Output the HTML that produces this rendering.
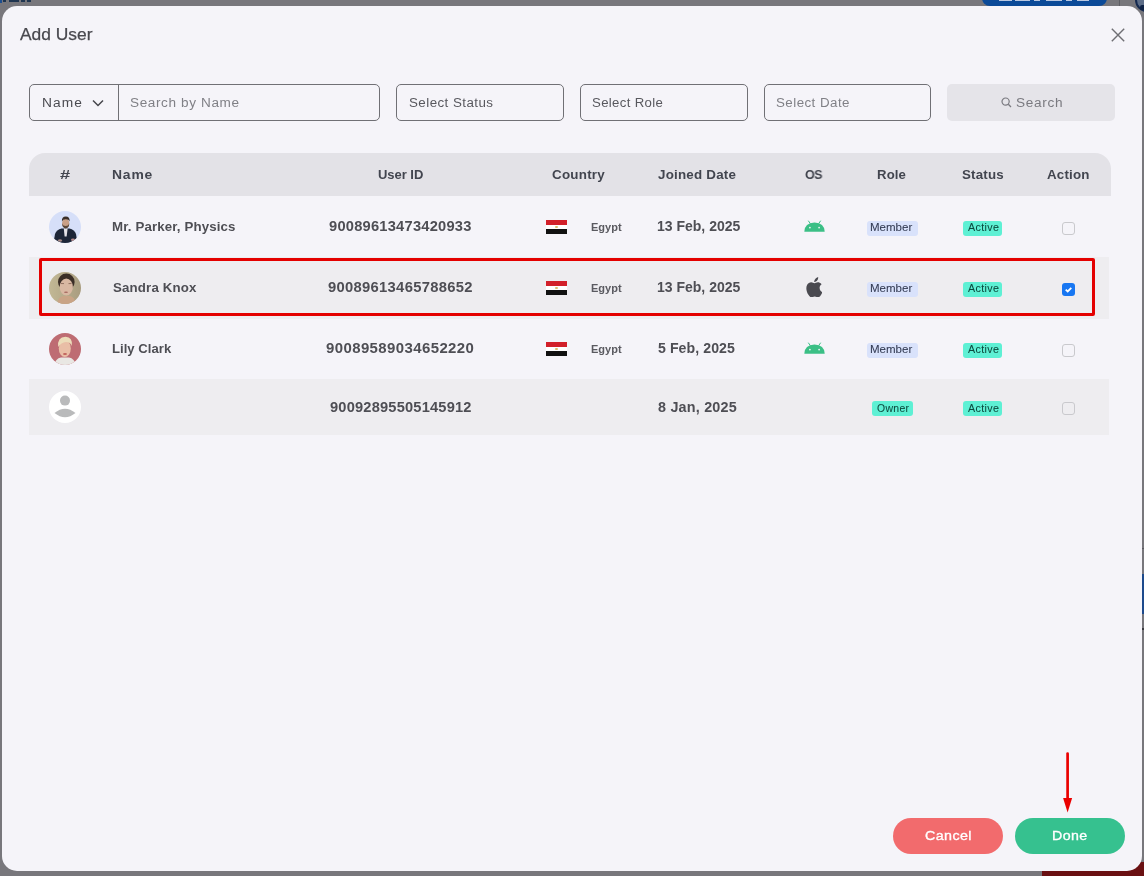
<!DOCTYPE html>
<html><head><meta charset="utf-8">
<style>
*{box-sizing:border-box;margin:0;padding:0}
html,body{width:1144px;height:876px;overflow:hidden}
body{background:#78777c;position:relative;font-family:"Liberation Sans",sans-serif}
.a{position:absolute}
.t{position:absolute;white-space:pre;line-height:1;transform-origin:0 0;will-change:transform}
.box{position:absolute;border:1px solid #707075;border-radius:5px}
.row{position:absolute;left:29px;width:1080px;background:#eeedf0}
.badge{position:absolute;border-radius:3px}
.cb{position:absolute;width:13px;height:13px;border:1px solid #c9c9cd;border-radius:3px}
.flag{position:absolute;width:21px;height:14px}
.flag i{display:block;height:4.6px}
.flag i.w{height:4.8px;position:relative;background:#fff}
.flag i.w b{position:absolute;left:9.3px;top:1.2px;width:2.4px;height:2.6px;background:#dcc070;border-radius:1px}
</style></head>
<body>
<!-- background fragments -->
<div class="a" style="left:0;top:0;width:2px;height:3px;background:#1d4e8f"></div>
<div class="a" style="left:3px;top:0;width:3px;height:1.5px;background:#1f3550"></div>
<div class="a" style="left:9px;top:0;width:10px;height:1.5px;background:#1f3550"></div>
<div class="a" style="left:21px;top:0;width:4px;height:1.5px;background:#1f3550"></div>
<div class="a" style="left:27px;top:0;width:4px;height:1.5px;background:#1f3550"></div>
<div class="a" style="left:982px;top:-10px;width:125px;height:16px;border-radius:8px;background:#0b4a98"></div>
<div class="a" style="left:1119px;top:0;width:1px;height:6px;background:#5e5e63"></div>
<div class="a" style="left:999px;top:0;width:13px;height:1.3px;background:#b9c8e2"></div>
<div class="a" style="left:1015px;top:0;width:15px;height:1.3px;background:#b9c8e2"></div>
<div class="a" style="left:1034px;top:0;width:6px;height:1.3px;background:#b9c8e2"></div>
<div class="a" style="left:1046px;top:0;width:16px;height:1.3px;background:#b9c8e2"></div>
<div class="a" style="left:1066px;top:0;width:6px;height:1.3px;background:#b9c8e2"></div>
<div class="a" style="left:1077px;top:0;width:12px;height:1.3px;background:#b9c8e2"></div>
<div class="a" style="left:1135px;top:-12px;width:24px;height:24px;border-radius:50%;border:2px solid #15294f;background:#5d6d88"></div><div class="a" style="left:1140px;top:5px;width:6px;height:5px;background:#0f2245;border-radius:2px"></div>
<div class="a" style="left:1141px;top:574px;width:3px;height:40px;background:#1d4a8c"></div>
<div class="a" style="left:1141px;top:548px;width:3px;height:1px;background:#5a5a60"></div>
<div class="a" style="left:1141px;top:628px;width:3px;height:2px;background:#3a3a40"></div>
<div class="a" style="left:1042px;top:862px;width:102px;height:14px;background:#6a1012"></div>

<div class="a" style="left:2px;top:6px;width:1139.5px;height:865px;border-radius:15px;background:#f5f4f9"></div>

<!-- close -->
<svg class="a" style="left:1111px;top:28px" width="14" height="14" viewBox="0 0 14 14"><path d="M0.8 0.8L13.2 13.2M13.2 0.8L0.8 13.2" stroke="#6e6e73" stroke-width="1.4"/></svg>

<!-- filters -->
<div class="box" style="left:29px;top:84px;width:351px;height:37px"></div>
<div class="a" style="left:118px;top:84px;width:1px;height:37px;background:#707075"></div>
<svg class="a" style="left:92px;top:99px" width="12" height="8" viewBox="0 0 12 8"><path d="M1 1.5L6 6.5L11 1.5" fill="none" stroke="#46464c" stroke-width="1.5"/></svg>
<div class="box" style="left:396px;top:84px;width:168px;height:37px"></div>
<div class="box" style="left:580px;top:84px;width:168px;height:37px"></div>
<div class="box" style="left:764px;top:84px;width:167px;height:37px"></div>
<div class="a" style="left:947px;top:84px;width:168px;height:37px;border-radius:5px;background:#e5e4e9"></div>
<svg class="a" style="left:1001px;top:97px" width="11" height="11" viewBox="0 0 11 11"><circle cx="4.6" cy="4.6" r="3.6" fill="none" stroke="#7a7a80" stroke-width="1.2"/><path d="M7.3 7.3L10 10" stroke="#7a7a80" stroke-width="1.3"/></svg>

<!-- table header -->
<div class="a" style="left:29px;top:153px;width:1082px;height:43px;border-radius:16px 16px 0 0;background:#e3e2e7"></div>

<!-- row backgrounds -->
<div class="row" style="top:257px;height:62px"></div>
<div class="row" style="top:379px;height:55.5px"></div>

<!-- avatars -->
<svg class="a" style="left:49px;top:211px" width="32" height="32" viewBox="0 0 32 32"><defs><clipPath id="c1"><circle cx="16" cy="16" r="16"/></clipPath></defs><g clip-path="url(#c1)">
<rect width="32" height="32" fill="#d6dff9"/>
<path d="M4.5 32L6 23Q7.5 18.5 12.5 17.5L20.5 17.5Q25.5 18.5 27 23L28.5 32Z" fill="#1d2638"/>
<path d="M14.8 17.5L18.6 17.5L17.6 25.5L15.6 25.5Z" fill="#e4e2e8"/>
<ellipse cx="16.7" cy="12.2" rx="3.6" ry="4.6" fill="#c99f86"/>
<path d="M13.1 12.5Q13.3 17.2 16.7 17.4Q20.1 17.2 20.3 12.5Q19.5 15 16.7 15Q13.9 15 13.1 12.5Z" fill="#5a4537"/>
<path d="M12.9 10.5Q12.6 5.6 16.8 5.5Q21 5.6 20.6 10.5Q19.8 8.2 16.8 8.3Q13.8 8.2 12.9 10.5Z" fill="#3a2e27"/>
<ellipse cx="11" cy="29.5" rx="2" ry="1.2" fill="#a88a86"/><ellipse cx="24" cy="28.8" rx="2" ry="1.2" fill="#b78c8c"/>
</g></svg>
<svg class="a" style="left:49px;top:272px" width="32" height="32" viewBox="0 0 32 32"><defs><clipPath id="c2"><circle cx="16" cy="16" r="16"/></clipPath><linearGradient id="g2" x1="0" x2="1"><stop offset="0" stop-color="#c2b895"/><stop offset="1" stop-color="#a99d80"/></linearGradient></defs><g clip-path="url(#c2)">
<rect width="32" height="32" fill="url(#g2)"/>
<ellipse cx="17.3" cy="10" rx="8.3" ry="8.5" fill="#3b2e27"/>
<path d="M8 32Q9 25 14 24L21 24Q26 25 27 32Z" fill="#c9a486"/>
<ellipse cx="17.3" cy="15" rx="6.6" ry="8.6" fill="#d9b8a2"/>
<ellipse cx="17" cy="20.3" rx="2" ry="0.8" fill="#a86a62"/>
<path d="M12 11.5L15 11.6M19.5 11.6L22.5 11.5" stroke="#8a6a5a" stroke-width="0.9"/>
</g></svg>
<svg class="a" style="left:49px;top:333px" width="32" height="32" viewBox="0 0 32 32"><defs><clipPath id="c3"><circle cx="16" cy="16" r="16"/></clipPath></defs><g clip-path="url(#c3)">
<rect width="32" height="32" fill="#be6c73"/>
<path d="M5 32Q6.5 25.5 12 24.5L20 24.5Q25.5 25.5 27 32Z" fill="#e9e7e3"/>
<ellipse cx="15.8" cy="15.5" rx="6" ry="8.6" fill="#e9bea6"/>
<path d="M9.2 14Q8 4 16.5 3.8Q24 4 22.8 13Q21.5 9 17 9Q12 9.5 9.2 14Z" fill="#ecdcb9"/>
<ellipse cx="16" cy="21" rx="2" ry="0.9" fill="#c0625c"/>
</g></svg>
<svg class="a" style="left:49px;top:391px" width="32" height="32" viewBox="0 0 32 32"><circle cx="16" cy="16" r="16" fill="#fff"/><circle cx="16" cy="9.6" r="5" fill="#b9babb"/><path d="M5.5 22Q16 13.5 26.5 22Q16 30.5 5.5 22Z" fill="#b9babb"/></svg>

<!-- flags -->
<div class="flag" style="left:546px;top:220px"><i style="background:#d2202a"></i><i class="w"><b></b></i><i style="background:#111"></i></div>
<div class="flag" style="left:546px;top:281px"><i style="background:#d2202a"></i><i class="w"><b></b></i><i style="background:#111"></i></div>
<div class="flag" style="left:546px;top:342px"><i style="background:#d2202a"></i><i class="w"><b></b></i><i style="background:#111"></i></div>

<!-- OS icons -->
<svg class="a" style="left:803.5px;top:220px" width="21" height="12" viewBox="0 0 21 12"><path d="M0.3 11.7Q0.6 2.6 10.5 2.4Q20.4 2.6 20.7 11.7Z" fill="#3bbf86"/><path d="M4.3 0.7L6.3 3.6M16.7 0.7L14.7 3.6" stroke="#3bbf86" stroke-width="1"/><circle cx="5.9" cy="7.6" r="0.85" fill="#f4f3f8"/><circle cx="15.1" cy="7.6" r="0.85" fill="#f4f3f8"/></svg>
<svg class="a" style="left:803.5px;top:342px" width="21" height="12" viewBox="0 0 21 12"><path d="M0.3 11.7Q0.6 2.6 10.5 2.4Q20.4 2.6 20.7 11.7Z" fill="#3bbf86"/><path d="M4.3 0.7L6.3 3.6M16.7 0.7L14.7 3.6" stroke="#3bbf86" stroke-width="1"/><circle cx="5.9" cy="7.6" r="0.85" fill="#f4f3f8"/><circle cx="15.1" cy="7.6" r="0.85" fill="#f4f3f8"/></svg>
<svg class="a" style="left:805.6px;top:276.6px" width="16.5" height="20.5" viewBox="0 0 17 21"><path d="M14 11.1c0-2.4 2-3.6 2.1-3.7-1.2-1.7-3-1.9-3.6-2-1.5-.2-3 .9-3.8.9-.8 0-2-.9-3.3-.9C3.7 5.5 2.1 6.5 1.2 8c-1.8 3.1-.5 7.8 1.3 10.3.9 1.3 1.9 2.7 3.2 2.6 1.3-.1 1.8-.8 3.3-.8s2 .8 3.3.8c1.4 0 2.3-1.3 3.1-2.5 1-1.4 1.4-2.8 1.4-2.9-.1 0-2.8-1.1-2.8-4.4zM11.5 3.6c.7-.9 1.2-2.1 1.1-3.3-1 0-2.3.7-3 1.6-.7.8-1.3 2-1.1 3.2 1.1.1 2.3-.6 3-1.5z" fill="#4a4a50"/></svg>

<!-- badges -->
<div class="badge" style="left:867px;top:221px;width:51px;height:14.5px;background:#d9e2fb"></div>
<div class="badge" style="left:867px;top:282px;width:51px;height:14.5px;background:#d9e2fb"></div>
<div class="badge" style="left:867px;top:343px;width:51px;height:14.5px;background:#d9e2fb"></div>
<div class="badge" style="left:872px;top:401px;width:41px;height:14.7px;background:#5ef0d4"></div>
<div class="badge" style="left:963px;top:221px;width:39px;height:14.7px;background:#5ef0d4"></div>
<div class="badge" style="left:963px;top:282px;width:39px;height:14.7px;background:#5ef0d4"></div>
<div class="badge" style="left:963px;top:343px;width:39px;height:14.7px;background:#5ef0d4"></div>
<div class="badge" style="left:963px;top:401px;width:39px;height:14.7px;background:#5ef0d4"></div>

<!-- checkboxes -->
<div class="cb" style="left:1062px;top:222px"></div>
<div class="a" style="left:1062px;top:283px;width:13px;height:13px;border-radius:3px;background:#1877f2"><svg class="a" style="left:0;top:0" width="13" height="13" viewBox="0 0 13 13"><path d="M3.7 6.7L5.7 8.5L9.3 4.9" fill="none" stroke="#fff" stroke-width="1.8"/></svg></div>
<div class="cb" style="left:1062px;top:344px"></div>
<div class="cb" style="left:1062px;top:402px"></div>

<!-- red highlight -->
<div class="a" style="left:39px;top:258px;width:1056px;height:58px;border:3px solid #e40000;border-radius:2px"></div>

<!-- buttons -->
<div class="a" style="left:893px;top:818px;width:110px;height:36px;border-radius:18px;background:#f26b6d"></div>
<div class="a" style="left:1015px;top:818px;width:110px;height:36px;border-radius:18px;background:#36c18f"></div>

<!-- arrow -->
<svg class="a" style="left:1060px;top:748px" width="16" height="68" viewBox="0 0 16 68"><path d="M7.6 5.5L7.6 52" stroke="#ea0000" stroke-width="2.7" stroke-linecap="round"/><path d="M3.1 50L12.1 50L7.6 64.6Z" fill="#ea0000"/></svg>

<div class="t" style="left:19.60px;top:27px;font-size:16.8px;font-weight:400;color:#48484e;transform:scaleX(1.0371);-webkit-text-stroke:0.25px #48484e;">Add User</div>
<div class="t" style="left:41.50px;top:97px;font-size:12.5px;font-weight:400;color:#4a4a50;letter-spacing:0.956px;transform:scaleX(1.0984);">Name</div>
<div class="t" style="left:129.91px;top:97px;font-size:12.5px;font-weight:400;color:#808086;letter-spacing:0.560px;transform:scaleX(1.0859);">Search by Name</div>
<div class="t" style="left:408.63px;top:97px;font-size:12.5px;font-weight:400;color:#58585e;letter-spacing:0.401px;transform:scaleX(1.0705);">Select Status</div>
<div class="t" style="left:592.25px;top:97px;font-size:12.5px;font-weight:400;color:#58585e;letter-spacing:0.327px;transform:scaleX(1.0548);">Select Role</div>
<div class="t" style="left:776.13px;top:97px;font-size:12.5px;font-weight:400;color:#808086;letter-spacing:0.412px;transform:scaleX(1.0687);">Select Date</div>
<div class="t" style="left:1015.61px;top:97px;font-size:12.5px;font-weight:400;color:#7a7a80;letter-spacing:0.624px;transform:scaleX(1.0895);">Search</div>
<div class="t" style="left:59.90px;top:168px;font-size:13px;font-weight:700;color:#42454f;transform:scaleX(1.4000);">#</div>
<div class="t" style="left:112.33px;top:168px;font-size:13px;font-weight:700;color:#42454f;letter-spacing:0.747px;transform:scaleX(1.0706);">Name</div>
<div class="t" style="left:377.80px;top:168px;font-size:13px;font-weight:700;color:#42454f;letter-spacing:-0.033px;">User ID</div>
<div class="t" style="left:551.80px;top:168px;font-size:13px;font-weight:700;color:#42454f;letter-spacing:0.235px;transform:scaleX(1.0290);">Country</div>
<div class="t" style="left:657.80px;top:168px;font-size:13px;font-weight:700;color:#42454f;letter-spacing:0.204px;transform:scaleX(1.0284);">Joined Date</div>
<div class="t" style="left:805.00px;top:168px;font-size:13px;font-weight:700;color:#42454f;letter-spacing:-0.727px;transform:scaleX(0.9632);">OS</div>
<div class="t" style="left:877.49px;top:168px;font-size:13px;font-weight:700;color:#42454f;letter-spacing:0.115px;transform:scaleX(1.0130);">Role</div>
<div class="t" style="left:961.70px;top:168px;font-size:13px;font-weight:700;color:#42454f;letter-spacing:0.195px;transform:scaleX(1.0250);">Status</div>
<div class="t" style="left:1047.30px;top:168px;font-size:13px;font-weight:700;color:#42454f;letter-spacing:0.195px;transform:scaleX(1.0250);">Action</div>
<div class="t" style="left:112.08px;top:220px;font-size:13px;font-weight:700;color:#4e4e54;letter-spacing:0.133px;transform:scaleX(1.0209);">Mr. Parker, Physics</div>
<div class="t" style="left:113.00px;top:281px;font-size:13px;font-weight:700;color:#4e4e54;letter-spacing:0.162px;transform:scaleX(1.0206);">Sandra Knox</div>
<div class="t" style="left:112.09px;top:342px;font-size:13px;font-weight:700;color:#4e4e54;letter-spacing:0.039px;transform:scaleX(1.0060);">Lily Clark</div>
<div class="t" style="left:329.00px;top:219px;font-size:14.3px;font-weight:700;color:#4e4e54;letter-spacing:0.219px;transform:scaleX(1.0267);">90089613473420933</div>
<div class="t" style="left:328.00px;top:280px;font-size:14.3px;font-weight:700;color:#4e4e54;letter-spacing:0.281px;transform:scaleX(1.0344);">90089613465788652</div>
<div class="t" style="left:326.30px;top:341px;font-size:14.3px;font-weight:700;color:#4e4e54;letter-spacing:0.379px;transform:scaleX(1.0470);">90089589034652220</div>
<div class="t" style="left:329.70px;top:400px;font-size:14.3px;font-weight:700;color:#4e4e54;letter-spacing:0.192px;transform:scaleX(1.0233);">90092895505145912</div>
<div class="t" style="left:590.90px;top:222px;font-size:11px;font-weight:700;color:#5a5a60;letter-spacing:0.025px;">Egypt</div>
<div class="t" style="left:590.90px;top:283px;font-size:11px;font-weight:700;color:#5a5a60;letter-spacing:0.025px;">Egypt</div>
<div class="t" style="left:590.90px;top:344px;font-size:11px;font-weight:700;color:#5a5a60;letter-spacing:0.025px;">Egypt</div>
<div class="t" style="left:657.30px;top:219px;font-size:14px;font-weight:700;color:#4e4e54;">13 Feb, 2025</div>
<div class="t" style="left:657.30px;top:280px;font-size:14px;font-weight:700;color:#4e4e54;">13 Feb, 2025</div>
<div class="t" style="left:658.20px;top:341px;font-size:14px;font-weight:700;color:#4e4e54;letter-spacing:0.069px;transform:scaleX(1.0092);">5 Feb, 2025</div>
<div class="t" style="left:658.00px;top:400px;font-size:14px;font-weight:700;color:#4e4e54;letter-spacing:0.195px;transform:scaleX(1.0267);">8 Jan, 2025</div>
<div class="t" style="left:870.35px;top:223px;font-size:10px;font-weight:400;color:#323a52;transform:scaleX(1.1528);-webkit-text-stroke:0.05px #323a52;">Member</div>
<div class="t" style="left:870.35px;top:284px;font-size:10px;font-weight:400;color:#323a52;transform:scaleX(1.1528);-webkit-text-stroke:0.05px #323a52;">Member</div>
<div class="t" style="left:870.35px;top:345px;font-size:10px;font-weight:400;color:#323a52;transform:scaleX(1.1528);-webkit-text-stroke:0.05px #323a52;">Member</div>
<div class="t" style="left:967.50px;top:223px;font-size:10px;font-weight:400;color:#0d4a3e;letter-spacing:0.355px;transform:scaleX(1.0704);-webkit-text-stroke:0.05px #0d4a3e;">Active</div>
<div class="t" style="left:967.50px;top:284px;font-size:10px;font-weight:400;color:#0d4a3e;letter-spacing:0.355px;transform:scaleX(1.0704);-webkit-text-stroke:0.05px #0d4a3e;">Active</div>
<div class="t" style="left:967.50px;top:345px;font-size:10px;font-weight:400;color:#0d4a3e;letter-spacing:0.355px;transform:scaleX(1.0704);-webkit-text-stroke:0.05px #0d4a3e;">Active</div>
<div class="t" style="left:967.50px;top:404px;font-size:10px;font-weight:400;color:#0d4a3e;letter-spacing:0.355px;transform:scaleX(1.0704);-webkit-text-stroke:0.05px #0d4a3e;">Active</div>
<div class="t" style="left:876.80px;top:404px;font-size:10px;font-weight:400;color:#0d4a3e;letter-spacing:0.300px;transform:scaleX(1.0431);-webkit-text-stroke:0.05px #0d4a3e;">Owner</div>
<div class="t" style="left:925.00px;top:829px;font-size:13.7px;font-weight:400;color:#ffffff;letter-spacing:0.364px;transform:scaleX(1.0452);-webkit-text-stroke:0.35px #fff;">Cancel</div>
<div class="t" style="left:1052.26px;top:829px;font-size:13.7px;font-weight:400;color:#ffffff;letter-spacing:0.385px;transform:scaleX(1.0387);-webkit-text-stroke:0.35px #fff;">Done</div>
</body></html>
